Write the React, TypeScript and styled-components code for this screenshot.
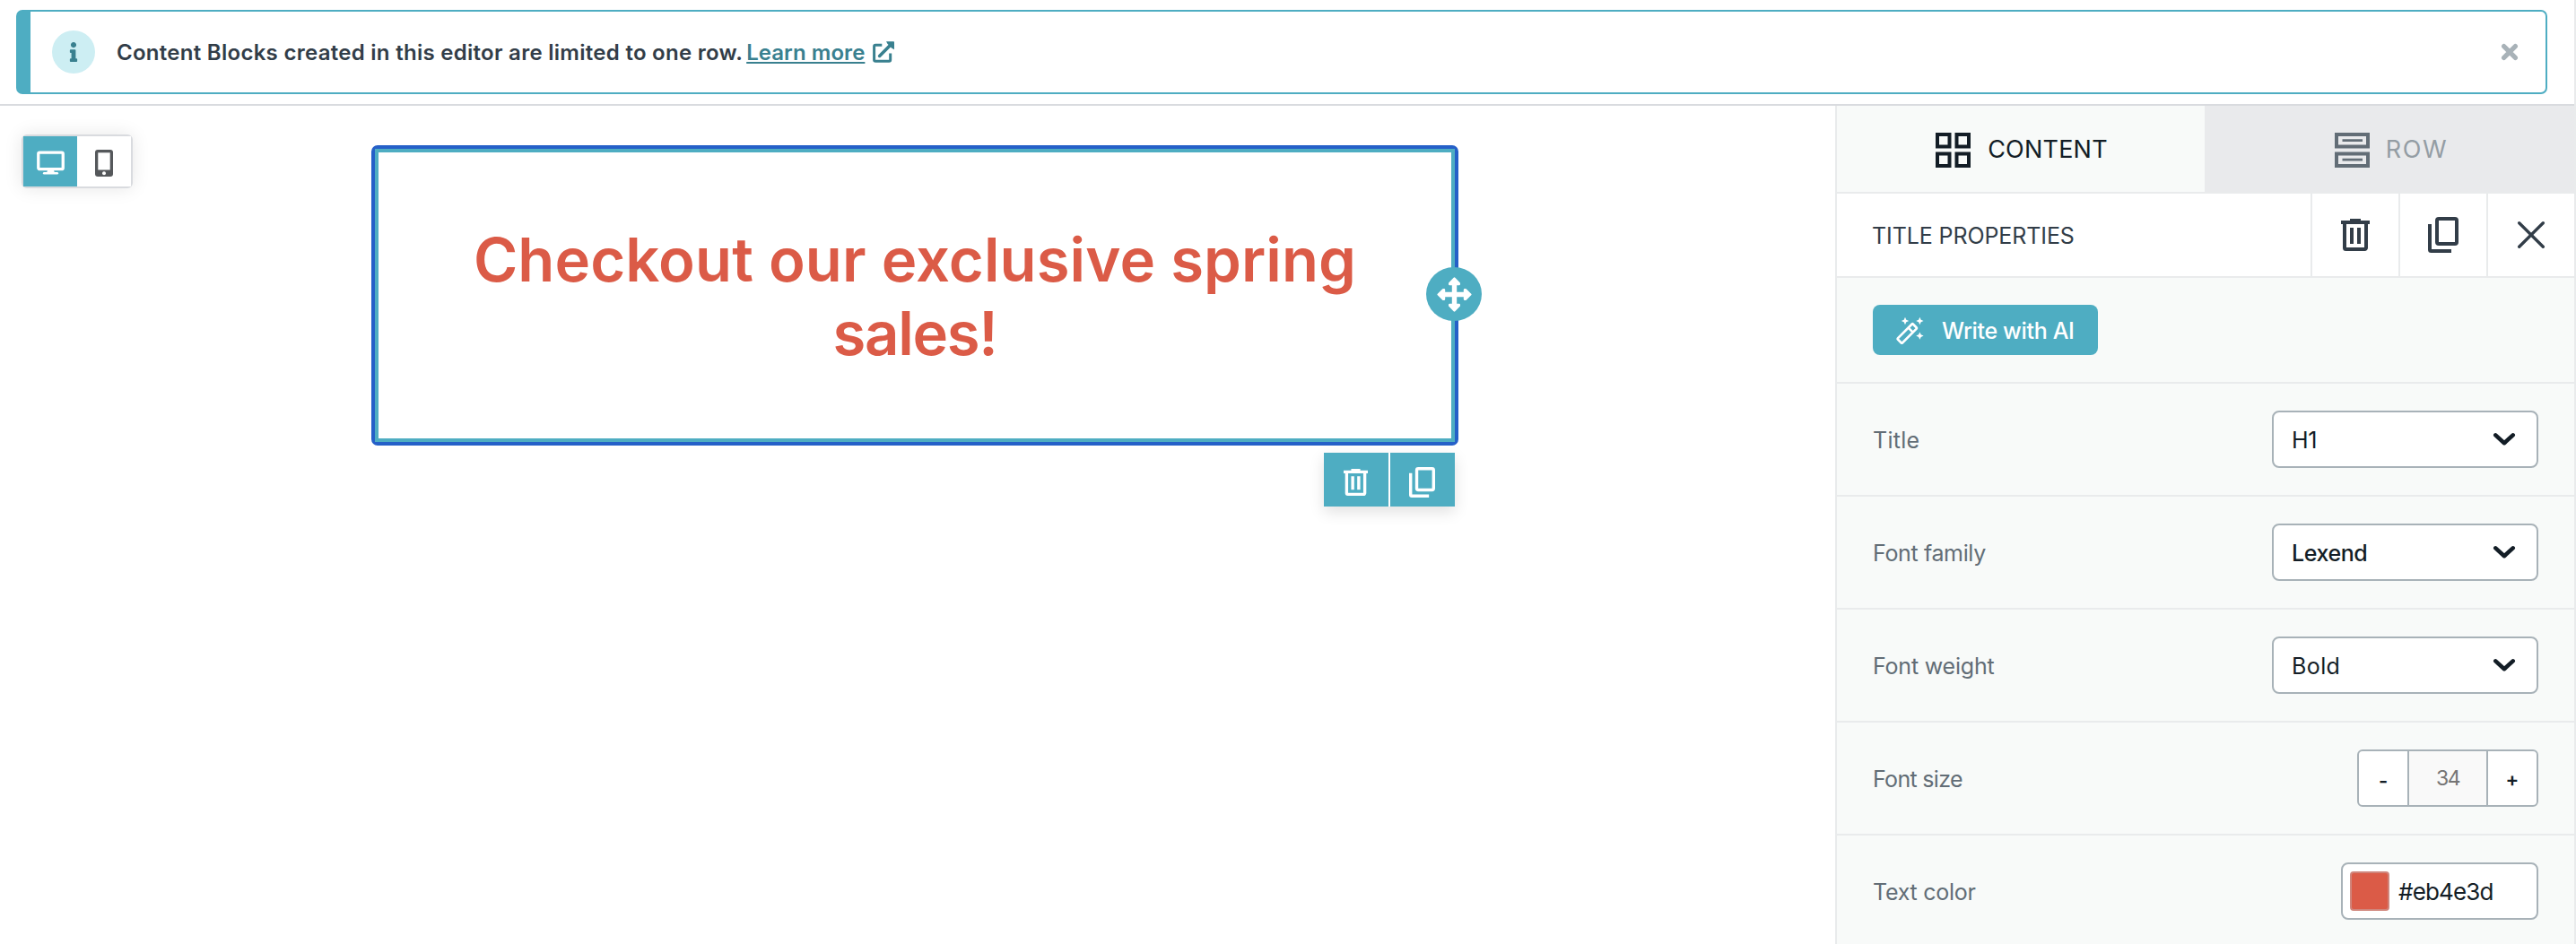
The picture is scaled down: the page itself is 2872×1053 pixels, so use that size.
import React from "react";
import styled, { createGlobalStyle, css } from "styled-components";
import { FaInfo } from "react-icons/fa";

const color = {
  teal: "#4eadc2",
  tealDark: "#39808f",
  blue: "#2560c8",
  ink: "#131d26",
  slate: "#323d48",
  label: "#626d76",
  line: "#e9ebec",
  divider: "#d9dbdf",
  field: "#a8b2b8",
  panel: "#f8faf9",
  brand: "#db5b47",
};

const GlobalStyle = createGlobalStyle`
  *, *::before, *::after { box-sizing: border-box; }
  body {
    margin: 0;
    background: #fff;
    font-family: Inter, "Liberation Sans", sans-serif;
  }
  button { font: inherit; color: inherit; margin: 0; padding: 0; border: 0; background: none; }
  svg { display: block; flex: none; overflow: visible; }
`;

const Page = styled.div`
  display: flex;
  flex-direction: column;
  width: 2872px;
  height: 1053px;
  overflow: hidden;
  border-right: 2px solid ${color.line};
`;

const TopBar = styled.header`
  flex: none;
  height: 118px;
  padding: 11px 30px 0 18px;
  border-bottom: 2px solid ${color.divider};
`;

const Banner = styled.div`
  display: flex;
  align-items: center;
  height: 94px;
  padding: 0 31px 0 24px;
  border: 2px solid ${color.teal};
  border-left-width: 16px;
  border-radius: 7px;
`;

const InfoBadge = styled.span`
  display: flex;
  align-items: center;
  justify-content: center;
  width: 48px;
  height: 48px;
  margin-right: 24px;
  border-radius: 50%;
  background: #cdeef3;
  color: ${color.tealDark};
`;

const BannerText = styled.span`
  padding-top: 1px;
  font-size: 24px;
  font-weight: 600;
  line-height: 32px;
  letter-spacing: 0.28px;
  white-space: nowrap;
  color: ${color.slate};
`;

const LearnMore = styled.a`
  margin: 0 8px 0 4px;
  padding-top: 1px;
  font-size: 24px;
  font-weight: 600;
  line-height: 32px;
  letter-spacing: 0.05px;
  white-space: nowrap;
  color: ${color.tealDark};
  text-decoration: underline;
  text-decoration-thickness: 2px;
  text-underline-offset: 2px;
  text-decoration-skip-ink: none;
`;

const CloseBanner = styled.button`
  margin-left: auto;
  color: ${color.field};
`;

const ExternalMark = styled.span`
  color: ${color.tealDark};
`;

const Body = styled.div`
  display: flex;
  flex: 1;
  min-height: 0;
`;

const Canvas = styled.main`
  display: flex;
  align-items: flex-start;
  flex: 1;
  padding: 32px 0 0 24px;
`;

const DeviceToggle = styled.div`
  display: flex;
  width: 124px;
  height: 60px;
  border: 2px solid ${color.divider};
  border-radius: 6px;
  box-shadow: 0 0 20px rgba(0, 0, 0, 0.1);
  background: #fff;
`;

const DeviceButton = styled.button<{ $active?: boolean }>`
  display: flex;
  align-items: center;
  justify-content: center;
  width: 60px;
  height: 56px;
  padding-top: 4px;
  background: ${(p) => (p.$active ? color.teal : "#fff")};
`;

const BlockColumn = styled.div`
  display: flex;
  flex-direction: column;
  align-items: flex-end;
  width: 1212px;
  margin: 12px 0 0 266px;
`;

const TitleBlock = styled.section`
  position: relative;
  width: 100%;
  border: 4px solid ${color.blue};
  border-radius: 7px;
`;

const TitleContent = styled.div`
  height: 327px;
  padding-top: 79px;
  border: 4px solid ${color.teal};
`;

const Heading = styled.h1`
  margin: 0;
  font-size: 67px;
  font-weight: 600;
  line-height: 82px;
  text-align: center;
  color: ${color.brand};
`;

const HeadingLine = styled.span<{ $track: number }>`
  display: block;
  letter-spacing: ${(p) => p.$track}px;
`;

const MoveHandle = styled.span`
  position: absolute;
  top: 132px;
  right: -30px;
  display: flex;
  align-items: center;
  justify-content: center;
  width: 62px;
  height: 60px;
  border-radius: 50%;
  background: ${color.teal};
  color: #fff;
`;

const BlockActions = styled.div`
  display: flex;
  gap: 2px;
  margin: 8px 4px 0 0;
  background: #fff;
  box-shadow: 0 6px 16px rgba(0, 0, 0, 0.12);
`;

const BlockAction = styled.button`
  display: flex;
  align-items: center;
  justify-content: center;
  width: 72px;
  height: 60px;
  padding: 6px 1px 0 0;
  background: ${color.teal};
  color: #fff;
`;

const Sidebar = styled.aside`
  display: flex;
  flex-direction: column;
  width: 824px;
  border-left: 2px solid ${color.line};
  background: ${color.panel};
`;

const Tabs = styled.div`
  display: flex;
  flex: none;
  height: 98px;
`;

const Tab = styled.button<{ $active?: boolean }>`
  display: flex;
  align-items: center;
  justify-content: center;
  width: ${(p) => (p.$active ? 410 : 412)}px;
  padding: 3px 0 0 ${(p) => (p.$active ? 2 : 4)}px;
  border-bottom: 2px solid ${color.line};
  background: ${(p) => (p.$active ? color.panel : "#e9eaec")};
  color: ${(p) => (p.$active ? color.ink : color.label)};
`;

const TabLabel = styled.span<{ $track: number; $muted?: boolean }>`
  margin: -1px 0 0 ${(p) => (p.$muted ? 18 : 19)}px;
  font-size: 27px;
  line-height: 36px;
  letter-spacing: ${(p) => p.$track}px;
  ${(p) => p.$muted && css`color: #949da4;`}
`;

const PanelHead = styled.div`
  display: flex;
  flex: none;
  height: 94px;
  border-bottom: 2px solid ${color.line};
  background: #fff;
`;

const PanelTitle = styled.h2`
  flex: 1;
  margin: 0;
  padding-left: 39px;
  font-size: 25px;
  font-weight: 400;
  line-height: 94px;
  letter-spacing: -0.1px;
  color: ${color.slate};
`;

const PanelAction = styled.button`
  display: flex;
  align-items: center;
  justify-content: center;
  width: 98px;
  border-left: 2px solid ${color.line};
  color: ${color.slate};
`;

const AiRow = styled.div`
  display: flex;
  align-items: center;
  flex: none;
  height: 118px;
  padding-left: 40px;
  border-bottom: 2px solid ${color.line};
`;

const AiButton = styled.button`
  display: flex;
  align-items: center;
  width: 251px;
  height: 56px;
  padding-left: 26px;
  border-radius: 8px;
  background: ${color.teal};
  color: #fff;
`;

const AiLabel = styled.span`
  margin-left: 19px;
  padding-top: 2px;
  font-size: 25px;
  font-weight: 500;
  line-height: 32px;
  letter-spacing: -0.34px;
  white-space: nowrap;
`;

const Field = styled.div`
  display: flex;
  align-items: center;
  justify-content: space-between;
  flex: none;
  height: 126px;
  padding: 0 40px;
  border-bottom: 2px solid ${color.line};
`;

const FieldLabel = styled.label<{ $track: number }>`
  padding-top: 2px;
  font-size: 25px;
  line-height: 32px;
  letter-spacing: ${(p) => p.$track}px;
  color: ${color.label};
`;

const box = css`
  display: flex;
  align-items: center;
  height: 64px;
  border: 2px solid ${color.field};
  background: #fff;
  color: ${color.ink};
`;

const Select = styled.div`
  ${box}
  justify-content: space-between;
  width: 297px;
  padding: 0 24px 0 20px;
  border-radius: 8px;
`;

const SelectValue = styled.span<{ $track: number; $weight?: number }>`
  padding-top: 2px;
  font-size: 25px;
  font-weight: ${(p) => p.$weight ?? 400};
  line-height: 32px;
  letter-spacing: ${(p) => p.$track}px;
`;

const Stepper = styled.div`
  ${box}
  width: 202px;
  border-radius: 6px;
  overflow: hidden;
`;

const StepButton = styled.button`
  display: flex;
  align-items: center;
  justify-content: center;
  width: 54px;
  height: 60px;
  padding-top: 1px;
`;

const StepSign = styled.span<{ $drop?: number }>`
  padding-top: ${(p) => p.$drop ?? 0}px;
  font-size: 22px;
  font-weight: 600;
  line-height: 30px;
`;

const StepValue = styled.span`
  width: 90px;
  height: 60px;
  border: solid ${color.field};
  border-width: 0 2px;
  background: #f9f9f9;
  font-size: 23px;
  line-height: 60px;
  letter-spacing: -1.5px;
  text-align: center;
  color: #757575;
`;

const ColorField = styled.div`
  ${box}
  width: 220px;
  padding-left: 8px;
  border-radius: 8px;
`;

const Swatch = styled.span`
  width: 44px;
  height: 44px;
  border: 2px solid #d0857b;
  border-radius: 4px;
  background: ${color.brand};
`;

const HexValue = styled.span`
  margin-left: 10px;
  padding-top: 2px;
  font-size: 26px;
  line-height: 32px;
  letter-spacing: -0.84px;
`;

const ExternalIcon = () => (
  <svg width="26" height="26" viewBox="0 0 26 26" fill="none">
    <path d="M11.3 5.2H4.1a1.5 1.5 0 0 0-1.5 1.5v15.1a1.5 1.5 0 0 0 1.5 1.5h15.1a1.5 1.5 0 0 0 1.5-1.5v-7.2" stroke="currentColor" strokeWidth="3" />
    <path d="M8.6 17.4 21 5" stroke="currentColor" strokeWidth="3.6" strokeLinecap="round" />
    <path d="M16 1.2h8.2a.8.8 0 0 1 .8.8v8.2L22 8.4 17.4 3.8z" fill="currentColor" />
  </svg>
);

const CrossIcon = ({ size, weight }: { size: number; weight: number }) => {
  const a = weight / 2;
  const b = size - a;
  return (
    <svg width={size} height={size} viewBox={`0 0 ${size} ${size}`} stroke="currentColor" strokeWidth={weight} strokeLinecap="round">
      <path d={`M${a} ${a}L${b} ${b}M${b} ${a}L${a} ${b}`} />
    </svg>
  );
};

const MonitorIcon = () => (
  <svg width="31" height="28" viewBox="0 0 31 28" fill="none" stroke="#fff">
    <rect x="1.75" y="2.05" width="27.5" height="18.6" rx="1.5" strokeWidth="3.3" />
    <path d="M12.2 21h6.6l1.2 4h-9z" fill="#fff" stroke="none" />
    <path d="M8.2 25.3h14.6" strokeWidth="2.6" strokeLinecap="round" />
  </svg>
);

const PhoneIcon = () => (
  <svg width="20" height="30" viewBox="0 0 20 30">
    <rect width="20" height="30" rx="3" fill="#55585b" />
    <rect x="3.3" y="3.3" width="13.4" height="19.2" fill="#fff" />
    <circle cx="10" cy="26.3" r="2" fill="#fff" />
  </svg>
);

const MoveIcon = () => (
  <svg width="39" height="39" viewBox="0 0 39 39" fill="currentColor" stroke="currentColor" strokeLinejoin="round">
    <path d="M19.5 7v25M7 19.5h25" strokeWidth="5.4" />
    <path
      d="M19.5 1.6l5.3 5.5v.9H14.2v-.9zM19.5 37.4l5.3-5.5V31H14.2v.9zM1.6 19.5l5.5-5.3H8v10.6h-.9zM37.4 19.5l-5.5-5.3H31v10.6h.9z"
      strokeWidth="2.4"
    />
  </svg>
);

const TrashIcon = ({ width = 32, height = 36 }: { width?: number; height?: number }) => (
  <svg width={width} height={height} viewBox="0 0 32 36" preserveAspectRatio="none" fill="none" stroke="currentColor" strokeWidth="4">
    <path d="M0 4h32M10 2h12" />
    <path d="M4 4v28.5a1.5 1.5 0 0 0 1.5 1.5h21a1.5 1.5 0 0 0 1.5-1.5V4M12 10v18M20 10v18" />
  </svg>
);

const CopyIcon = ({ width = 34, height = 40 }: { width?: number; height?: number }) => (
  <svg width={width} height={height} viewBox="0 0 34 40" preserveAspectRatio="none" fill="none" stroke="currentColor" strokeWidth="4">
    <rect x="10" y="2" width="22" height="28" rx="2" />
    <path d="M2 8v28.5a1.5 1.5 0 0 0 1.5 1.5H26" />
  </svg>
);

const GridIcon = () => (
  <svg width="39" height="39" viewBox="0 0 39 39" fill="none" stroke="currentColor" strokeWidth="4">
    <rect x="2" y="2" width="13.5" height="13.5" />
    <rect x="23.5" y="2" width="13.5" height="13.5" />
    <rect x="2" y="23.5" width="13.5" height="13.5" />
    <rect x="23.5" y="23.5" width="13.5" height="13.5" />
  </svg>
);

const RowsIcon = () => (
  <svg width="39" height="39" viewBox="0 0 39 39" fill="none" stroke="currentColor" strokeWidth="4">
    <rect x="2" y="2" width="35" height="13.5" />
    <rect x="2" y="23.5" width="35" height="13.5" />
    <path d="M8.5 8.6h22.5M8.5 30.2h22.5" strokeWidth="2.8" />
  </svg>
);

const star = (x: number, y: number) =>
  `M${x} ${y - 4.2}l1.3 2.9 2.9 1.3-2.9 1.3-1.3 2.9-1.3-2.9-2.9-1.3 2.9-1.3z`;

const WandIcon = () => (
  <svg width="32" height="32" viewBox="0 0 32 32" fill="none">
    <g transform="rotate(-45 12.3 20)" stroke="#fff" strokeWidth="2.6">
      <rect x="0.3" y="16.4" width="24" height="7.2" rx="0.8" />
      <path d="M17.8 16.4v7.2" />
    </g>
    <path d={star(10, 6) + star(26.4, 6) + star(26.4, 22.6)} fill="#fff" />
  </svg>
);

const ChevronIcon = () => (
  <svg width="24" height="14" viewBox="0 0 24 14" fill="none">
    <path d="M2.3 2.4 12 11.2l9.7-8.8" stroke="currentColor" strokeWidth="4.6" strokeLinecap="round" strokeLinejoin="round" />
  </svg>
);

const selects = [
  { label: "Title", track: 0.27, value: "H1", valueTrack: -0.28 },
  { label: "Font family", track: -0.36, value: "Lexend", valueTrack: -0.42, weight: 500 },
  { label: "Font weight", track: -0.2, value: "Bold", valueTrack: 0.4 },
];

export default function App() {
  return (
    <>
      <GlobalStyle />
      <Page>
        <TopBar>
          <Banner>
            <InfoBadge><FaInfo size={22} /></InfoBadge>
            <BannerText>Content Blocks created in this editor are limited to one row.</BannerText>
            <LearnMore>Learn more</LearnMore>
            <ExternalMark><ExternalIcon /></ExternalMark>
            <CloseBanner aria-label="Close"><CrossIcon size={18} weight={5.2} /></CloseBanner>
          </Banner>
        </TopBar>
        <Body>
          <Canvas>
            <DeviceToggle>
              <DeviceButton $active><MonitorIcon /></DeviceButton>
              <DeviceButton><PhoneIcon /></DeviceButton>
            </DeviceToggle>
            <BlockColumn>
              <TitleBlock>
                <TitleContent>
                  <Heading>
                    <HeadingLine $track={0.11}>Checkout our exclusive spring</HeadingLine>
                    <HeadingLine $track={-1.33}>sales!</HeadingLine>
                  </Heading>
                </TitleContent>
                <MoveHandle><MoveIcon /></MoveHandle>
              </TitleBlock>
              <BlockActions>
                <BlockAction><TrashIcon width={27} height={30} /></BlockAction>
                <BlockAction><CopyIcon width={29} height={34} /></BlockAction>
              </BlockActions>
            </BlockColumn>
          </Canvas>
          <Sidebar>
            <Tabs>
              <Tab $active><GridIcon /><TabLabel $track={0.21}>CONTENT</TabLabel></Tab>
              <Tab><RowsIcon /><TabLabel $track={1.6} $muted>ROW</TabLabel></Tab>
            </Tabs>
            <PanelHead>
              <PanelTitle>TITLE PROPERTIES</PanelTitle>
              <PanelAction><TrashIcon /></PanelAction>
              <PanelAction><CopyIcon /></PanelAction>
              <PanelAction><CrossIcon size={30} weight={3.4} /></PanelAction>
            </PanelHead>
            <AiRow>
              <AiButton><WandIcon /><AiLabel>Write with AI</AiLabel></AiButton>
            </AiRow>
            {selects.map((s) => (
              <Field key={s.label}>
                <FieldLabel $track={s.track}>{s.label}</FieldLabel>
                <Select>
                  <SelectValue $track={s.valueTrack} $weight={s.weight}>{s.value}</SelectValue>
                  <ChevronIcon />
                </Select>
              </Field>
            ))}
            <Field>
              <FieldLabel $track={-0.68}>Font size</FieldLabel>
              <Stepper>
                <StepButton><StepSign $drop={5}>-</StepSign></StepButton>
                <StepValue>34</StepValue>
                <StepButton><StepSign>+</StepSign></StepButton>
              </Stepper>
            </Field>
            <Field>
              <FieldLabel $track={-0.26}>Text color</FieldLabel>
              <ColorField>
                <Swatch />
                <HexValue>#eb4e3d</HexValue>
              </ColorField>
            </Field>
          </Sidebar>
        </Body>
      </Page>
    </>
  );
}
